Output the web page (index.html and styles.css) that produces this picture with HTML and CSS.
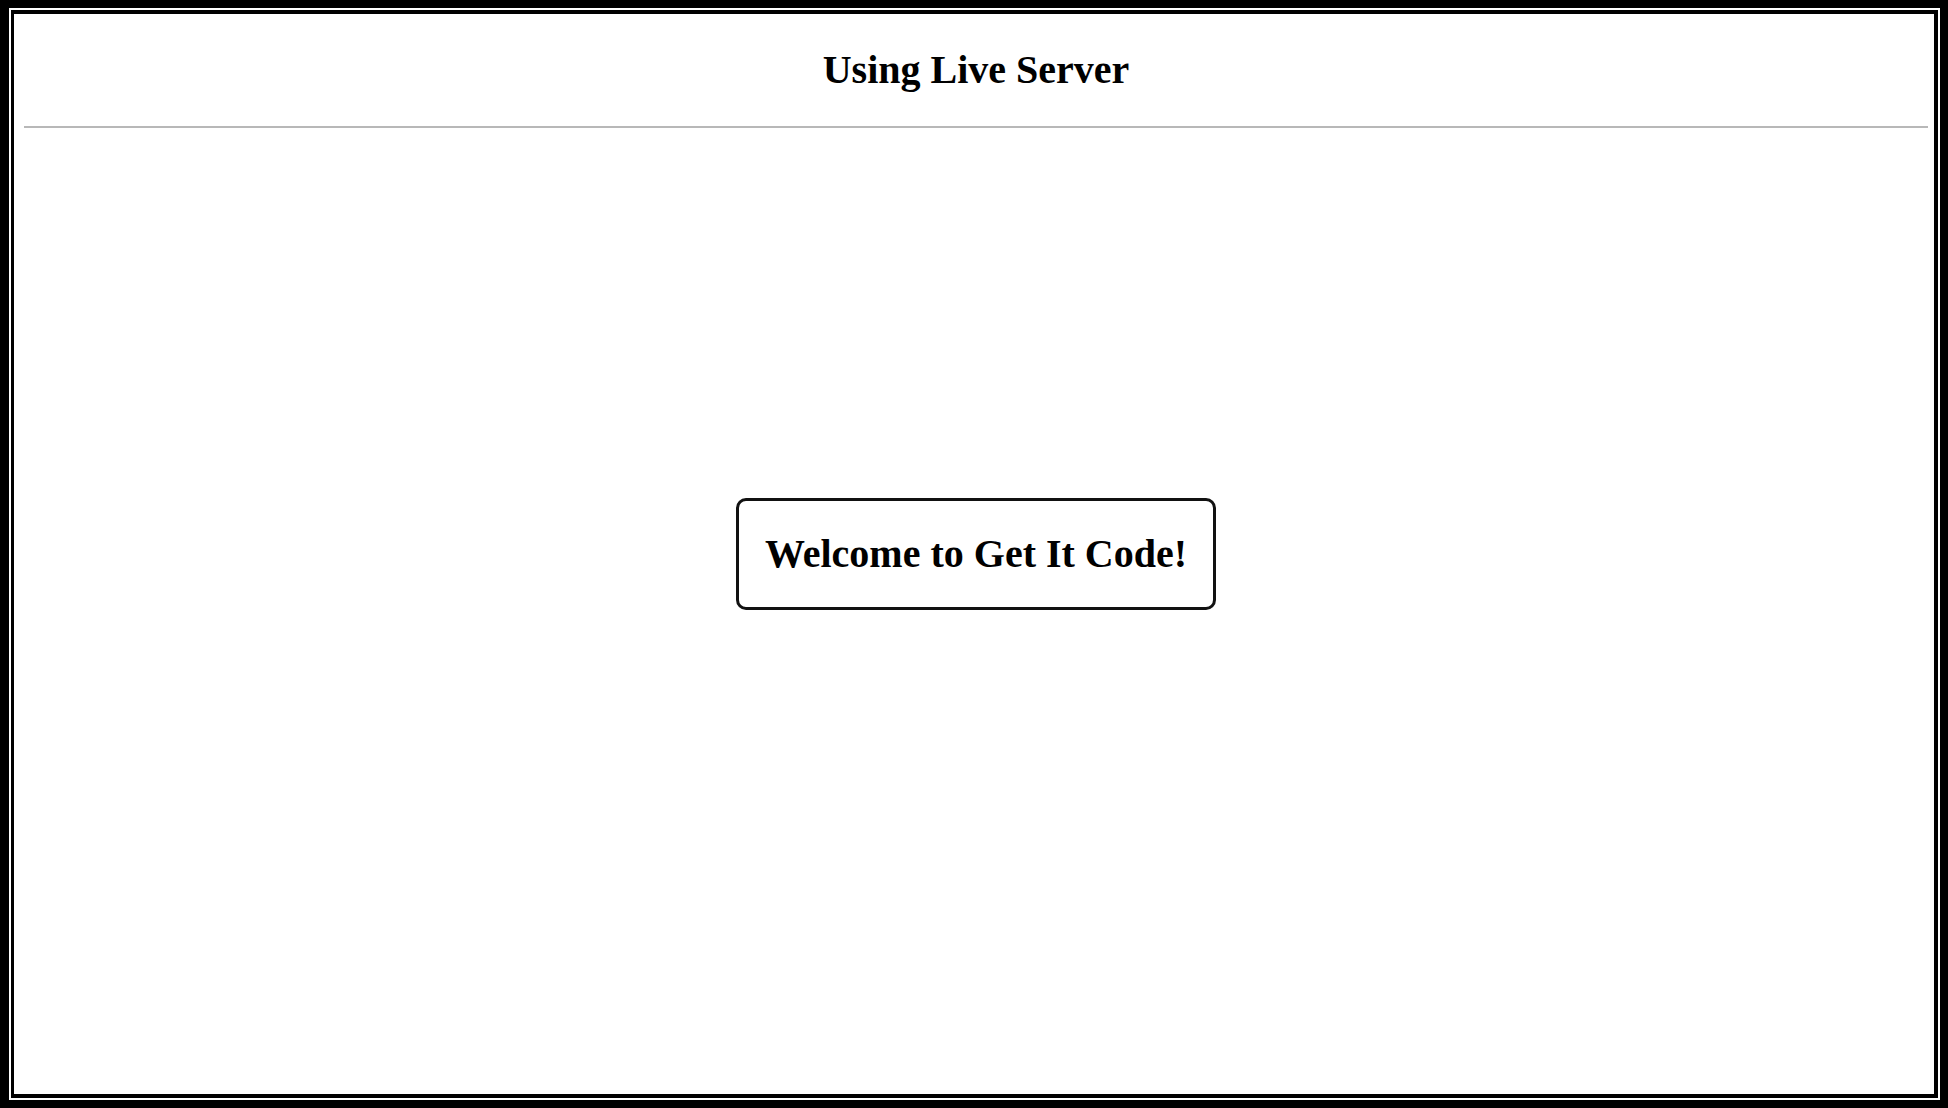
FILE: index.html
```html
<!DOCTYPE html>
<html lang="en">
<head>
<meta charset="utf-8">
<title>Using Live Server</title>
<link rel="stylesheet" href="styles.css">
</head>
<body>
<div class="frame">
  <div class="inner">
    <header class="header">
      <h1 class="title">Using Live Server</h1>
      <hr class="rule">
    </header>
    <main class="main">
      <h1 class="welcome">Welcome to Get It Code!</h1>
    </main>
  </div>
</div>
</body>
</html>
```

FILE: styles.css
```css
html, body {
  margin: 0;
  padding: 0;
  background: #000;
}
body {
  font-family: "Liberation Serif", "Times New Roman", serif;
  color: #000;
}
.frame {
  box-sizing: border-box;
  width: 1948px;
  height: 1108px;
  border: 8px solid #000;
  border-left-width: 9px;
  padding: 2px;
  background: #fff;
}
.inner {
  box-sizing: border-box;
  height: 100%;
  border: 4px solid #000;
  border-left-width: 3px;
  padding: 0 6px 0 10px;
  display: flex;
  flex-direction: column;
  background: #fff;
}
.title {
  margin: 33px 0 33px;
  font-size: 40px;
  font-weight: bold;
  text-align: center;
  line-height: 46px;
}
.rule {
  margin: 0;
  border: none;
  height: 2px;
  background: #b8b8b8;
}
.main {
  flex: 1;
  display: flex;
  align-items: center;
  justify-content: center;
  padding-bottom: 115px;
}
.welcome {
  margin: 0;
  font-size: 40px;
  font-weight: bold;
  line-height: 46px;
  padding: 30px 26px;
  border: 3px solid #111;
  border-radius: 10px;
}
```
